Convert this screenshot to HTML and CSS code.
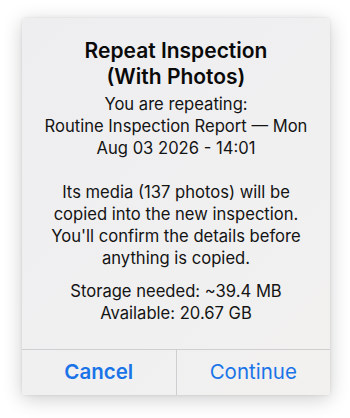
FILE: index.html
```html
<!DOCTYPE html>
<html>
<head>
<meta charset="utf-8">
<link rel="stylesheet" href="styles.css">
</head>
<body>
<div class="dialog">
  <div class="content">
    <h1 class="title">Repeat Inspection<br>(With Photos)</h1>
    <p class="msg">You are repeating:<br>Routine Inspection Report — Mon<br>Aug 03 2026 - 14:01</p>
    <p class="msg">Its media (137 photos) will be<br>copied into the new inspection.<br>You'll confirm the details before<br>anything is copied.</p>
    <p class="msg last">Storage needed: ~39.4 MB<br>Available: 20.67 GB</p>
  </div>
  <div class="actions">
    <button class="btn cancel">Cancel</button>
    <button class="btn primary">Continue</button>
  </div>
</div>
</body>
</html>
```
FILE: styles.css
```css
html, body {
  margin: 0;
  padding: 0;
  background: #ffffff;
}
body {
  width: 350px;
  height: 418px;
  font-family: Inter, "Noto Sans", sans-serif;
  color: #111111;
  display: flex;
  justify-content: center;
  padding-top: 18px;
  box-sizing: border-box;
}
.dialog {
  width: 308px;
  height: 377px;
  background: linear-gradient(135deg, #eeeef0 0%, #f0f0f1 60%, #f2f1ef 100%);
  border-radius: 3px;
  box-shadow: 0 4px 20px rgba(0,0,0,0.20), 0 0 3px rgba(0,0,0,0.10);
  display: flex;
  flex-direction: column;
  margin-left: 2px;
}
.content {
  flex: 1;
  min-height: 0;
  padding: 20px 4px 0;
  text-align: center;
}
.title {
  margin: 0 0 3px;
  font-size: 21px;
  font-weight: 600;
  line-height: 26px;
  color: #0a0a0a;
}
.msg {
  margin: 0 0 22px;
  font-size: 16.6px;
  line-height: 22px;
  color: #141414;
  white-space: nowrap;
}
.msg.last {
  margin: -11px 0 0;
}
.actions {
  height: 45px;
  border-top: 1px solid #cfcfd2;
  display: flex;
  flex: none;
}
.btn {
  flex: 1;
  background: none;
  border: none;
  font-family: inherit;
  font-size: 20.5px;
  color: #1a74e8;
  padding: 0 0 2px;
}
.cancel {
  font-weight: 600;
  border-right: 1px solid #cfcfd2;
}
```
